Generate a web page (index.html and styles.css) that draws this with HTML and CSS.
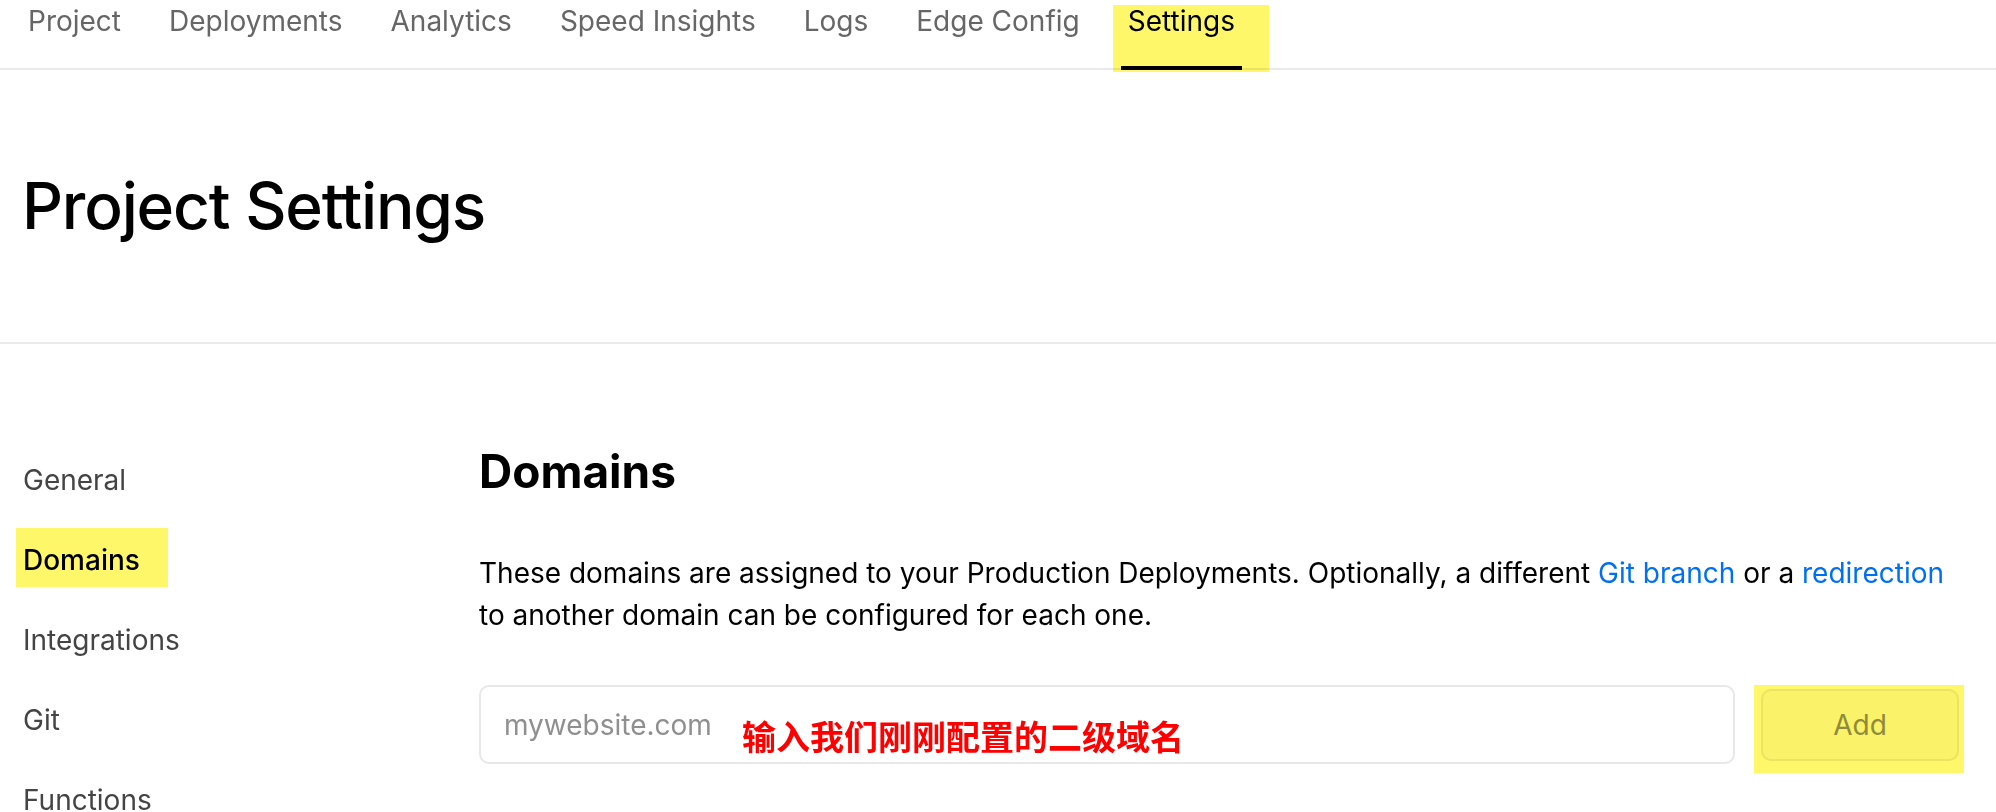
FILE: index.html
```html
<!DOCTYPE html>
<html lang="en">
<head>
<meta charset="utf-8">
<title>Project Settings</title>
<link rel="stylesheet" href="styles.css">
</head>
<body>
<nav class="tabs">
  <a class="tab">Project</a>
  <a class="tab">Deployments</a>
  <a class="tab">Analytics</a>
  <a class="tab">Speed Insights</a>
  <a class="tab">Logs</a>
  <a class="tab">Edge Config</a>
  <a class="tab tab-active">Settings<span class="hl hl-tab"></span></a>
</nav>
<header class="page-head">
  <h1 class="page-title">Project Settings</h1>
</header>
<div class="layout">
  <aside class="sidebar">
    <a class="side-item">General</a>
    <a class="side-item side-active">Domains<span class="hl hl-side"></span></a>
    <a class="side-item">Integrations</a>
    <a class="side-item">Git</a>
    <a class="side-item">Functions</a>
  </aside>
  <main class="content">
    <h2 class="section-title">Domains</h2>
    <p class="section-desc">These domains are assigned to your Production Deployments. Optionally, a different <a class="link">Git branch</a> or a <a class="link">redirection</a> to another domain can be configured for each one.</p>
    <div class="add-row">
      <div class="field">
        <input class="field-input" type="text" placeholder="mywebsite.com">
        <span class="note">输入我们刚刚配置的二级域名</span>
      </div>
      <div class="btn-wrap">
        <button class="btn-add" type="button">Add</button>
        <span class="hl hl-btn"></span>
      </div>
    </div>
  </main>
</div>
</body>
</html>
```
FILE: styles.css
```css
* { box-sizing: border-box; }

html, body {
  margin: 0;
  background: #fff;
  overflow: hidden;
}

body {
  font-family: Inter, "Noto Sans", "Noto Sans CJK SC", sans-serif;
  color: #000;
  width: 1996px;
  height: 812px;
}

/* highlighter overlay */
.hl {
  position: absolute;
  background: #fff76a;
  mix-blend-mode: multiply;
  pointer-events: none;
}

/* top tabs */
.tabs {
  display: flex;
  gap: 34px;
  height: 70px;
  padding-left: 21px;
  border-bottom: 2px solid #eaeaea;
}

.tab {
  position: relative;
  height: 70px;
  padding: 1px 7px 0;
  font-size: 28px;
  line-height: 40px;
  color: #666;
  white-space: nowrap;
}

.tab-active {
  color: #000;
  border-bottom: 4px solid #000;
}

.hl-tab {
  left: -8px;
  top: 5px;
  width: 156px;
  height: 67px;
}

/* page heading */
.page-head {
  padding: 104px 0 104px 22px;
  border-bottom: 2px solid #eaeaea;
}

.page-title {
  margin: 0;
  font-size: 64px;
  line-height: 64px;
  font-weight: 500;
  letter-spacing: -1.2px;
}

/* layout */
.layout {
  display: flex;
  padding: 101px 37px 0 23px;
}

.sidebar {
  width: 456px;
  flex: none;
  display: flex;
  flex-direction: column;
  gap: 40px;
  padding-top: 15px;
}

.side-item {
  position: relative;
  align-self: flex-start;
  font-size: 28px;
  line-height: 40px;
  color: #444;
}

.side-active {
  color: #000;
  font-weight: 500;
}

.hl-side {
  left: -7px;
  top: -12px;
  width: 152px;
  height: 59px;
}

.content {
  flex: 1;
  min-width: 0;
}

.section-title {
  margin: 0;
  font-size: 46px;
  line-height: 52px;
  font-weight: 700;
  letter-spacing: 0;
}

.section-desc {
  margin: 55px 0 0;
  font-size: 28px;
  line-height: 42px;
  color: #000;
}

.link {
  color: #0070f3;
  text-decoration: none;
}

.add-row {
  display: flex;
  align-items: center;
  gap: 26px;
  margin-top: 49px;
}

.field {
  position: relative;
  flex: 1;
}

.field-input {
  display: block;
  width: 100%;
  height: 79px;
  padding: 0 23px;
  border: 2px solid #e8e8e8;
  border-radius: 10px;
  font-family: Inter, sans-serif;
  font-size: 28px;
  color: #000;
  background: #fff;
  outline: none;
}

.field-input::placeholder {
  color: #8f8f8f;
}

.note {
  position: absolute;
  left: 263px;
  top: 31px;
  font-family: "Noto Sans CJK SC", sans-serif;
  font-size: 34px;
  line-height: 40px;
  font-weight: 700;
  color: #ff0000;
  white-space: nowrap;
}

.btn-wrap {
  position: relative;
  flex: none;
}

.btn-add {
  display: block;
  width: 198px;
  height: 72px;
  border: 2px solid #ebebeb;
  border-radius: 10px;
  background: #fafafa;
  font-family: Inter, sans-serif;
  font-size: 28px;
  color: #8f8f8f;
}

.hl-btn {
  left: -7px;
  top: -4px;
  width: 210px;
  height: 88px;
}
```
